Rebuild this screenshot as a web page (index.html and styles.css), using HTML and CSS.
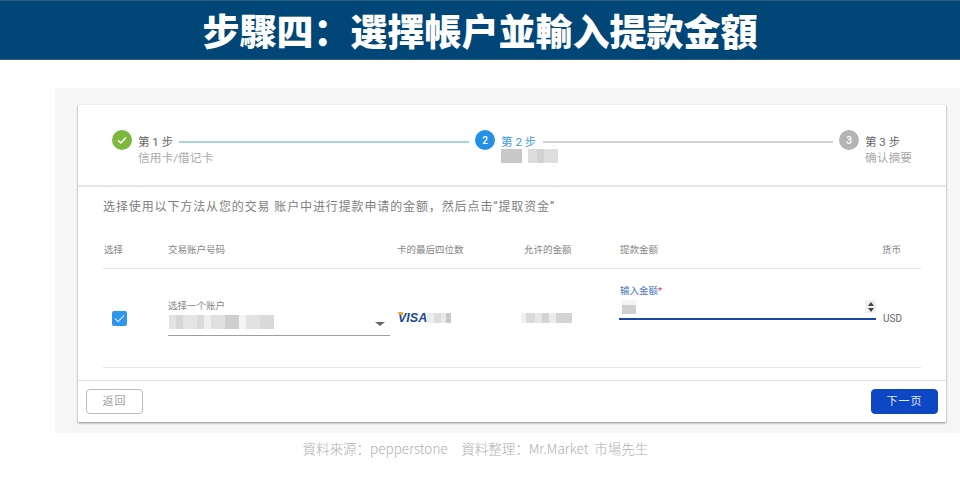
FILE: index.html
```html
<!DOCTYPE html>
<html lang="zh">
<head>
<meta charset="utf-8">
<title>步驟四</title>
<link rel="stylesheet" href="styles.css">
</head>
<body>
<header class="banner"><h1>步驟四：選擇帳戶並輸入提款金額</h1></header>
<main class="panel">
  <section class="card">
    <div class="stepper">
      <div class="step">
        <span class="dot dot-done"><svg width="12" height="12" viewBox="0 0 12 12"><path d="M2 6.3 4.8 9 10 3.4" fill="none" stroke="#fff" stroke-width="1.5"/></svg></span>
        <div class="step-text"><div class="step-title">第 1 步</div><div class="step-sub step-sub-over">信用卡/借记卡</div></div>
      </div>
      <span class="line line-done"></span>
      <div class="step">
        <span class="dot dot-active">2</span>
        <div class="step-text"><div class="step-title step-title-active">第 2 步</div><div class="patch patch-step"></div></div>
      </div>
      <span class="line"></span>
      <div class="step">
        <span class="dot dot-next">3</span>
        <div class="step-text"><div class="step-title">第 3 步</div><div class="step-sub">确认摘要</div></div>
      </div>
    </div>
    <p class="desc">选择使用以下方法从您的交易 账户中进行提款申请的金额，然后点击“提取资金”</p>
    <div class="grid grid-head">
      <div class="head-first">选择</div>
      <div>交易账户号码</div>
      <div>卡的最后四位数</div>
      <div>允许的金额</div>
      <div class="head-last"><span>提款金额</span><span>货币</span></div>
    </div>
    <div class="grid grid-row">
      <div class="check"><svg width="15" height="15" viewBox="0 0 15 15"><path d="M3 7.6 6 10.6 12 4.4" fill="none" stroke="#cfe6fb" stroke-width="1.2"/></svg></div>
      <div class="select">
        <div class="select-label">选择一个账户</div>
        <div class="select-value"><div class="patch patch-account"></div><span class="caret"></span></div>
      </div>
      <div class="visa-cell">
        <span class="visa"><i class="visa-tick"></i>VISA</span><div class="patch patch-card"></div>
      </div>
      <div><div class="patch patch-allowed"></div></div>
      <div class="amount">
        <div class="amount-field">
          <div class="amount-label">输入金额<em>*</em></div>
          <div class="amount-input">
            <div class="patch patch-amount"></div>
            <div class="spin"><i class="up"></i><i class="down"></i></div>
          </div>
        </div>
        <span class="usd">USD</span>
      </div>
    </div>
    <footer class="actions">
      <button class="btn btn-back" type="button">返回</button>
      <button class="btn btn-next" type="button">下一页</button>
    </footer>
  </section>
</main>
<p class="source">資料來源：pepperstone　資料整理：Mr.Market&nbsp; 市場先生</p>
</body>
</html>
```

FILE: styles.css
```css
* { box-sizing: border-box; }
html, body { margin: 0; padding: 0; }
body {
  width: 960px;
  height: 502px;
  overflow: hidden;
  background: #fff;
  font-family: Roboto, "Noto Sans CJK SC", sans-serif;
}
.banner {
  height: 60px;
  background: #004677;
  border-top: 1px solid #2b5f88;
  border-bottom: 1px solid #2b5f88;
  display: flex;
  justify-content: center;
  align-items: center;
}
.banner h1 {
  margin: 0;
  color: #fff;
  font: 900 37px/1 "Noto Sans CJK TC", sans-serif;
  white-space: nowrap;
}
.panel {
  margin: 28px 0 0 55px;
  width: 905px;
  height: 345px;
  padding: 17px 14px 11px 23px;
  background: #f6f6f6;
}
.card {
  height: 317px;
  background: #fff;
  box-shadow: 0 1px 2px rgba(0, 0, 0, .45);
}
.stepper {
  height: 82px;
  padding: 25px 34px 0;
  display: flex;
  align-items: flex-start;
  border-bottom: 2px solid #e6e6e6;
}
.step { display: flex; gap: 6px; }
.dot {
  width: 20px;
  height: 20px;
  border-radius: 50%;
  display: flex;
  align-items: center;
  justify-content: center;
  color: #fff;
  font-size: 10px;
  font-weight: 500;
  flex: none;
}
.dot-done { background: #7cb83f; }
.dot-active { background: #2390e8; }
.dot-next { background: #b4b4b4; }
.step-text { padding-top: 5px; }
.step-title {
  font-size: 11.5px;
  line-height: 15px;
  color: #666;
  white-space: nowrap;
}
.step-title-active { color: #3d9be6; }
.step-sub {
  font-size: 11.75px;
  line-height: 16px;
  color: #aaa;
  white-space: nowrap;
}
.step-sub-over { width: 0; }
.line {
  flex: 1;
  height: 1.5px;
  margin: 11px 6px 0 6px;
  background: #d2d2d2;
}
.line-done { background: #a9d1e4; }
.desc {
  margin: 0;
  padding: 10px 25px 0;
  font-size: 12px;
  letter-spacing: .88px;
  line-height: 20px;
  color: #808080;
  white-space: nowrap;
}
.grid {
  margin: 0 25px;
  display: grid;
  grid-template-columns: 65px 229px 127px 96px 1fr;
  border-bottom: 1px solid #e6e6e6;
}
.grid-head {
  height: 52px;
  padding-top: 26px;
  font-size: 9.5px;
  line-height: 14px;
  color: #858585;
}
.head-first { padding-left: 1px; }
.head-last { display: flex; justify-content: space-between; padding-right: 20px; }
.grid-row {
  height: 99px;
  align-items: center;
  margin-bottom: 12px;
}
.check {
  margin-left: 9px;
  width: 15px;
  height: 15px;
  border-radius: 2px;
  background: #2f96ee;
}
.check svg { display: block; }
.select { padding-bottom: 1px; }
.select-label {
  font-size: 9.5px;
  line-height: 14px;
  color: #858585;
}
.select-value {
  margin-right: 7px;
  height: 23px;
  padding: 2px 5px 0 1px;
  display: flex;
  justify-content: space-between;
  border-bottom: 1px solid #9e9e9e;
}
.caret {
  width: 0;
  height: 0;
  margin-top: 7px;
  border-left: 5px solid transparent;
  border-right: 5px solid transparent;
  border-top: 4px solid #666;
}
.visa-cell { display: flex; align-items: center; }
.visa {
  position: relative;
  width: 30px;
  padding-left: 1px;
  color: #1a4a8c;
  font: italic 700 12.5px/14px "Liberation Sans", sans-serif;
}
.visa-tick {
  position: absolute;
  left: 0;
  top: 1px;
  width: 6px;
  height: 3px;
  background: #e8ac2c;
  clip-path: polygon(0 0, 100% 0, 100% 100%, 60% 100%);
}
.patch { height: 14px; }
.patch-step {
  width: 57px;
  margin: -1px -21px 0 0;
  background: linear-gradient(to right, #c8c8c8 0 21px, #fff 21px 27px, #dcdcdc 27px 36px, #d2d2d2 36px 43px, #dedede 43px 57px);
}
.patch-account {
  width: 105px;
  background: linear-gradient(to right, #e2e2e2 0 7px, #d6d6d6 7px 14px, #e4e4e4 14px 28px, #dadada 28px 35px, #efefef 35px 42px, #e0e0e0 42px 56px, #cfcfcf 56px 70px, #f4f4f4 70px 77px, #e2e2e2 77px 91px, #dadada 91px 105px);
}
.patch-card {
  width: 24px;
  height: 10px;
  background: linear-gradient(to right, #ededed 0 7px, #dcdcdc 7px 14px, #e8e8e8 14px 19px, #c8c8c8 19px 24px);
}
.patch-allowed {
  width: 51px;
  height: 10px;
  margin-left: -3px;
  background: linear-gradient(to right, #f0f0f0 0 5px, #dadada 5px 14px, #e6e6e6 14px 21px, #d4d4d4 21px 28px, #ececec 28px 35px, #d4d4d4 35px 51px);
}
.amount { display: flex; align-items: flex-end; padding-bottom: 32px; margin-left: -1px; }
.amount-field { width: 257px; }
.amount-label {
  padding-left: 1px;
  font-size: 9.5px;
  line-height: 13px;
  color: #4a72bb;
}
.amount-label em { color: #d9365a; font-style: normal; }
.amount-input {
  height: 23px;
  padding: 3px 0 0 3px;
  display: flex;
  justify-content: space-between;
  border-bottom: 2px solid #1a47a8;
}
.patch-amount {
  width: 14px;
  height: 14px;
  background: linear-gradient(to bottom, #f4f4f4 0 5px, #d0d0d0 5px 14px);
}
.spin {
  width: 11px;
  height: 13px;
  background: #f0f0f0;
  display: flex;
  flex-direction: column;
  align-items: center;
  justify-content: center;
  gap: 2px;
}
.spin i { width: 0; height: 0; border-left: 3px solid transparent; border-right: 3px solid transparent; }
.spin .up { border-bottom: 4px solid #444; }
.spin .down { border-top: 4px solid #444; }
.usd {
  margin: 0 0 -5px 7px;
  font-size: 10px;
  line-height: 12px;
  color: #666;
}
.actions {
  height: 42px;
  padding: 8px 8px 0;
  display: flex;
  justify-content: space-between;
  align-items: flex-start;
  border-top: 1px solid #e0e0e0;
}
.btn {
  height: 25px;
  border-radius: 4px;
  font: 11px/1 Roboto, "Noto Sans CJK SC", sans-serif;
  letter-spacing: 1px;
  padding: 0;
}
.btn-back { width: 57px; background: #fff; border: 1px solid #bbb; color: #a0a0a0; }
.btn-next { width: 67px; background: #0d47c4; border: 1px solid #0d47c4; color: #e4ebfa; }
.source {
  margin: 6px 0 0;
  padding-right: 9px;
  text-align: center;
  font: 300 13.5px/18px "Noto Sans CJK TC", sans-serif;
  color: #b0b0b0;
  white-space: nowrap;
}
```
